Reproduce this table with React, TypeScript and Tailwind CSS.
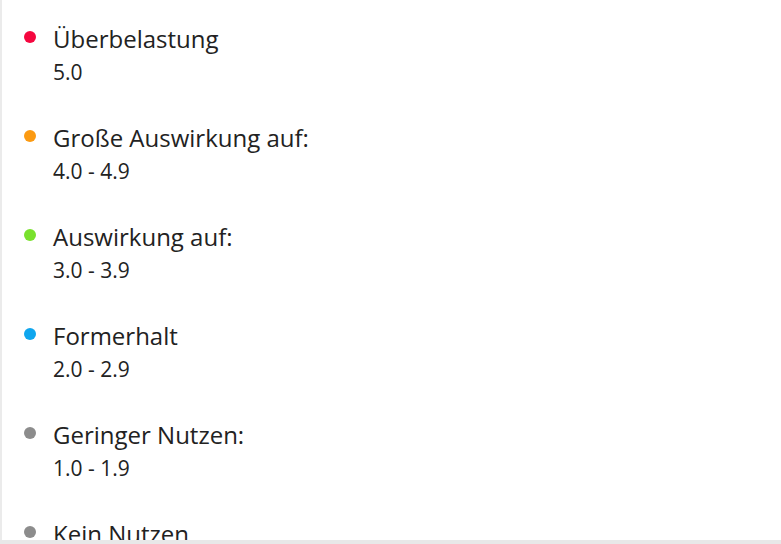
const items = [
  { title: "Überbelastung", range: "5.0", dot: "bg-[#f5073f]" },
  { title: "Große Auswirkung auf:", range: "4.0 - 4.9", dot: "bg-[#fb9a12]" },
  { title: "Auswirkung auf:", range: "3.0 - 3.9", dot: "bg-[#79e12d]" },
  { title: "Formerhalt", range: "2.0 - 2.9", dot: "bg-[#0fa6ee]" },
  { title: "Geringer Nutzen:", range: "1.0 - 1.9", dot: "bg-[#8c8c8c]" },
  { title: "Kein Nutzen", range: "0.0 - 0.9", dot: "bg-[#8c8c8c]" },
];

export default function App() {
  return (
    <div className="flex h-[544px] w-[781px] flex-col overflow-hidden bg-white font-['Open_Sans',sans-serif] text-[#222]">
      <div className="min-h-0 flex-1 overflow-hidden border-l-2 border-[#ebebeb]">
        <ul className="flex flex-col gap-[36px] pl-[22px] pt-[23px]">
          {items.map((it) => (
            <li key={it.title} className="flex items-start gap-[17px]">
              <span className={`mt-[8px] h-3 w-3 shrink-0 rounded-full ${it.dot}`} />
              <div>
                <div className="text-[24px] leading-[32px]">{it.title}</div>
                <div className="mt-[3px] text-[21px] leading-[28px]">{it.range}</div>
              </div>
            </li>
          ))}
        </ul>
      </div>
      <div className="h-[4px] shrink-0 bg-[#e8e8e8]" />
    </div>
  );
}
